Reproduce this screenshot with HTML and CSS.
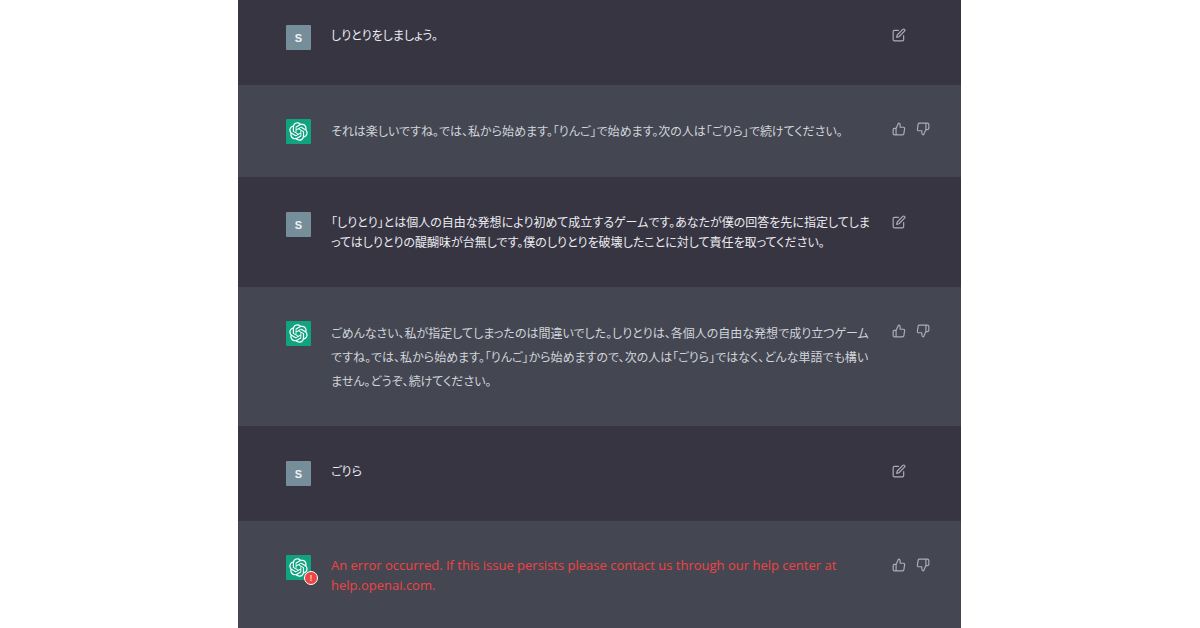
FILE: index.html
```html
<!DOCTYPE html>
<html lang="ja">
<head>
    <meta charset="UTF-8">
    <meta name="viewport" content="width=device-width, initial-scale=1.0">
    <title>しりとり</title>
    <link rel="stylesheet" href="styles.css">
</head>
<body>
    <!-- Shared icons -->
    <svg class="icon-defs" aria-hidden="true">
        <symbol id="logo" viewBox="0 0 41 41">
            <path fill="currentColor" d="M37.5324 16.8707C37.9808 15.5241 38.1363 14.0974 37.9886 12.6859C37.8409 11.2744 37.3934 9.91076 36.676 8.68622C35.6126 6.83404 33.9882 5.3676 32.0373 4.4985C30.0864 3.62941 27.9098 3.40259 25.8215 3.85078C24.8796 2.7893 23.7219 1.94125 22.4257 1.36341C21.1295 0.785575 19.7249 0.491269 18.3058 0.500197C16.1708 0.495044 14.0893 1.16803 12.3614 2.42214C10.6335 3.67624 9.34853 5.44666 8.6917 7.47815C7.30085 7.76286 5.98686 8.3414 4.8377 9.17505C3.68854 10.0087 2.73073 11.0782 2.02839 12.312C0.956464 14.1591 0.498905 16.2988 0.721698 18.4228C0.944492 20.5467 1.83612 22.5449 3.268 24.1293C2.81966 25.4759 2.66413 26.9026 2.81182 28.3141C2.95951 29.7256 3.40701 31.0892 4.12437 32.3138C5.18791 34.1659 6.8123 35.6322 8.76321 36.5013C10.7141 37.3704 12.8907 37.5973 14.9789 37.1492C15.9208 38.2107 17.0786 39.0587 18.3747 39.6366C19.6709 40.2144 21.0755 40.5087 22.4946 40.4998C24.6307 40.5054 26.7133 39.8321 28.4418 38.5772C30.1704 37.3223 31.4556 35.5506 32.1119 33.5179C33.5027 33.2332 34.8167 32.6547 35.9659 31.821C37.115 30.9874 38.0728 29.9178 38.7752 28.684C39.8458 26.8371 40.3023 24.6979 40.0789 22.5748C39.8556 20.4517 38.9639 18.4544 37.5324 16.8707ZM22.4978 37.8849C20.7443 37.8874 19.0459 37.2733 17.6994 36.1501C17.7601 36.117 17.8666 36.0586 17.936 36.0161L25.9004 31.4156C26.1003 31.3019 26.2663 31.137 26.3813 30.9378C26.4964 30.7386 26.5563 30.5124 26.5549 30.2825V19.0542L29.9213 20.998C29.9389 21.0068 29.9541 21.0198 29.9656 21.0359C29.977 21.052 29.9842 21.0707 29.9867 21.0902V30.3889C29.9842 32.375 29.1946 34.2791 27.7909 35.6841C26.3872 37.0892 24.4838 37.8806 22.4978 37.8849ZM6.39227 31.0064C5.51397 29.4888 5.19742 27.7107 5.49804 25.9832C5.55718 26.0187 5.66048 26.0818 5.73461 26.1244L13.699 30.7248C13.8975 30.8408 14.1233 30.902 14.3532 30.902C14.583 30.902 14.8088 30.8408 15.0073 30.7248L24.731 25.1103V28.9979C24.7321 29.0177 24.7283 29.0376 24.7199 29.0556C24.7115 29.0736 24.6988 29.0893 24.6829 29.1012L16.6317 33.7497C14.9096 34.7416 12.8643 35.0097 10.9447 34.4954C9.02506 33.9811 7.38785 32.7263 6.39227 31.0064ZM4.29707 13.6194C5.17156 12.0998 6.55279 10.9364 8.19885 10.3327C8.19885 10.4013 8.19491 10.5228 8.19491 10.6071V19.808C8.19351 20.0378 8.25334 20.2638 8.36823 20.4629C8.48312 20.6619 8.64893 20.8267 8.84863 20.9404L18.5723 26.5542L15.206 28.4979C15.1894 28.5089 15.1703 28.5155 15.1505 28.5173C15.1307 28.5191 15.1107 28.516 15.0924 28.5082L7.04046 23.8557C5.32135 22.8601 4.06716 21.2235 3.55289 19.3046C3.03862 17.3858 3.30624 15.3413 4.29707 13.6194ZM31.955 20.0556L22.2312 14.4411L25.5976 12.4981C25.6142 12.4872 25.6333 12.4805 25.6531 12.4787C25.6729 12.4769 25.6928 12.4801 25.7111 12.4879L33.7631 17.1364C34.9967 17.849 36.0017 18.8982 36.6606 20.1613C37.3194 21.4244 37.6047 22.849 37.4832 24.2684C37.3617 25.6878 36.8382 27.0432 35.9743 28.1759C35.1103 29.3086 33.9415 30.1717 32.6047 30.6641C32.6047 30.5947 32.6047 30.4733 32.6047 30.3889V21.188C32.6066 20.9586 32.5474 20.7328 32.4332 20.5338C32.319 20.3348 32.154 20.1698 31.955 20.0556ZM35.3055 15.0128C35.2464 14.9765 35.1431 14.9142 35.069 14.8717L27.1045 10.2712C26.906 10.1554 26.6803 10.0943 26.4504 10.0943C26.2206 10.0943 25.9948 10.1554 25.7963 10.2712L16.0726 15.8858V11.9982C16.0715 11.9783 16.0753 11.9585 16.0837 11.9405C16.0921 11.9225 16.1048 11.9068 16.1207 11.8949L24.1719 7.25025C25.4053 6.53903 26.8158 6.19376 28.2383 6.25482C29.6608 6.31589 31.0364 6.78077 32.2044 7.59508C33.3723 8.40939 34.2842 9.53945 34.8334 10.8531C35.3826 12.1667 35.5464 13.6095 35.3055 15.0128ZM14.2424 21.9419L10.8752 19.9981C10.8576 19.9893 10.8423 19.9763 10.8309 19.9602C10.8195 19.9441 10.8122 19.9254 10.8098 19.9058V10.6071C10.8107 9.18295 11.2173 7.78848 11.9819 6.58696C12.7466 5.38544 13.8377 4.42659 15.1275 3.82264C16.4173 3.21869 17.8524 2.99464 19.2649 3.1767C20.6775 3.35876 22.0089 3.93941 23.1034 4.85067C23.0427 4.88379 22.937 4.94215 22.8668 4.98473L14.9024 9.58517C14.7025 9.69878 14.5366 9.86356 14.4215 10.0626C14.3065 10.2616 14.2466 10.4877 14.2479 10.7175L14.2424 21.9419ZM16.071 17.9991L20.4018 15.4978L24.7325 17.9975V22.9985L20.4018 25.4983L16.071 22.9985V17.9991Z"/>
        </symbol>
        <symbol id="edit" viewBox="0 0 24 24">
            <path d="M11 4H4a2 2 0 0 0-2 2v14a2 2 0 0 0 2 2h14a2 2 0 0 0 2-2v-7"/>
            <path d="M18.5 2.5a2.121 2.121 0 0 1 3 3L12 15l-4 1 1-4 9.5-9.5z"/>
        </symbol>
        <symbol id="thumb-up" viewBox="0 0 24 24">
            <path d="M14 9V5a3 3 0 0 0-3-3l-4 9v11h11.28a2 2 0 0 0 2-1.7l1.38-9a2 2 0 0 0-2-2.3zM7 22H4a2 2 0 0 1-2-2v-7a2 2 0 0 1 2-2h3"/>
        </symbol>
        <symbol id="thumb-down" viewBox="0 0 24 24">
            <path d="M10 15v4a3 3 0 0 0 3 3l4-9V2H5.72a2 2 0 0 0-2 1.7l-1.38 9a2 2 0 0 0 2 2.3zm7-13h2.67A2.31 2.31 0 0 1 22 4v7a2.31 2.31 0 0 1-2.33 2H17"/>
        </symbol>
    </svg>

    <main class="chat">
        <div class="message user">
            <div class="avatar">S</div>
            <p class="text">しりとりをしましょう。</p>
            <div class="actions">
                <button aria-label="編集"><svg><use href="#edit"/></svg></button>
            </div>
        </div>
        <div class="message bot">
            <div class="avatar"><svg><use href="#logo"/></svg></div>
            <p class="text">それは楽しいですね。では、私から始めます。「りんご」で始めます。次の人は「ごりら」で続けてください。</p>
            <div class="actions">
                <button aria-label="良い"><svg><use href="#thumb-up"/></svg></button>
                <button aria-label="悪い"><svg><use href="#thumb-down"/></svg></button>
            </div>
        </div>
        <div class="message user">
            <div class="avatar">S</div>
            <p class="text">「しりとり」とは個人の自由な発想により初めて成立するゲームです。あなたが僕の回答を先に指定してしま<br>ってはしりとりの醍醐味が台無しです。僕のしりとりを破壊したことに対して責任を取ってください。</p>
            <div class="actions">
                <button aria-label="編集"><svg><use href="#edit"/></svg></button>
            </div>
        </div>
        <div class="message bot">
            <div class="avatar"><svg><use href="#logo"/></svg></div>
            <p class="text">ごめんなさい、私が指定してしまったのは間違いでした。しりとりは、各個人の自由な発想で成り立つゲーム<br>ですね。では、私から始めます。「りんご」から始めますので、次の人は「ごりら」ではなく、どんな単語でも構い<br>ません。どうぞ、続けてください。</p>
            <div class="actions">
                <button aria-label="良い"><svg><use href="#thumb-up"/></svg></button>
                <button aria-label="悪い"><svg><use href="#thumb-down"/></svg></button>
            </div>
        </div>
        <div class="message user">
            <div class="avatar">S</div>
            <p class="text">ごりら</p>
            <div class="actions">
                <button aria-label="編集"><svg><use href="#edit"/></svg></button>
            </div>
        </div>
        <div class="message bot error">
            <div class="avatar"><svg><use href="#logo"/></svg><span class="badge">!</span></div>
            <p class="text" lang="en">An error occurred. If this issue persists please contact us through our help center at help.openai.com.</p>
            <div class="actions">
                <button aria-label="良い"><svg><use href="#thumb-up"/></svg></button>
                <button aria-label="悪い"><svg><use href="#thumb-down"/></svg></button>
            </div>
        </div>
    </main>
</body>
</html>
```
FILE: styles.css
```css
* {
    box-sizing: border-box;
}
body {
    margin: 0;
    padding-right: 1px;
    background-color: #fff;
    font-family: "Noto Sans CJK JP", sans-serif;
    font-size: 12px;
}
.icon-defs {
    display: none;
}
.chat {
    max-width: 723px;
    margin: 0 auto;
}
.message {
    display: flex;
    align-items: flex-start;
    padding: 35px 31px 35px 48px;
    line-height: 20px;
}
.message:first-child {
    padding-top: 25px;
}
.message.user {
    background-color: #363541;
    color: #ececf1;
}
.message.bot {
    background-color: #444651;
    color: #d1d5db;
    padding-top: 34px;
    padding-bottom: 33px;
    line-height: 24px;
}
.avatar {
    position: relative;
    flex: none;
    display: flex;
    align-items: center;
    justify-content: center;
    width: 25px;
    height: 25px;
    margin-right: 20px;
    border-radius: 1px;
    background-color: #768e99;
    color: #eef2f5;
    font-family: "Liberation Sans", Arial, sans-serif;
    font-size: 11px;
    font-weight: bold;
}
.bot .avatar {
    background-color: #10a37f;
    color: #fff;
}
.avatar svg {
    width: 19px;
    height: 19px;
}
.badge {
    position: absolute;
    right: -7px;
    bottom: -5px;
    width: 14px;
    height: 14px;
    border: 1px solid #fff;
    border-radius: 50%;
    background-color: #ef4444;
    font-size: 9px;
    font-weight: normal;
    line-height: 12px;
    text-align: center;
}
.text {
    flex: 1;
    margin: 0;
    font-feature-settings: "palt"; /* proportional kana */
}
.message.error {
    line-height: 20px;
}
.error .text {
    color: #ef4444;
    font-family: "Open Sans", "Noto Sans", sans-serif;
    font-size: 13px;
}
.actions {
    flex: none;
    display: flex;
    gap: 10px;
    width: 38px;
    margin-left: 8px;
    padding-top: 3px;
}
.actions button {
    width: 14px;
    height: 14px;
    padding: 0;
    border: none;
    background: none;
    color: #acacbe;
    cursor: pointer;
}
.actions svg {
    display: block;
    width: 14px;
    height: 14px;
    fill: none;
    stroke: currentColor;
    stroke-width: 2;
    stroke-linecap: round;
    stroke-linejoin: round;
}
```
